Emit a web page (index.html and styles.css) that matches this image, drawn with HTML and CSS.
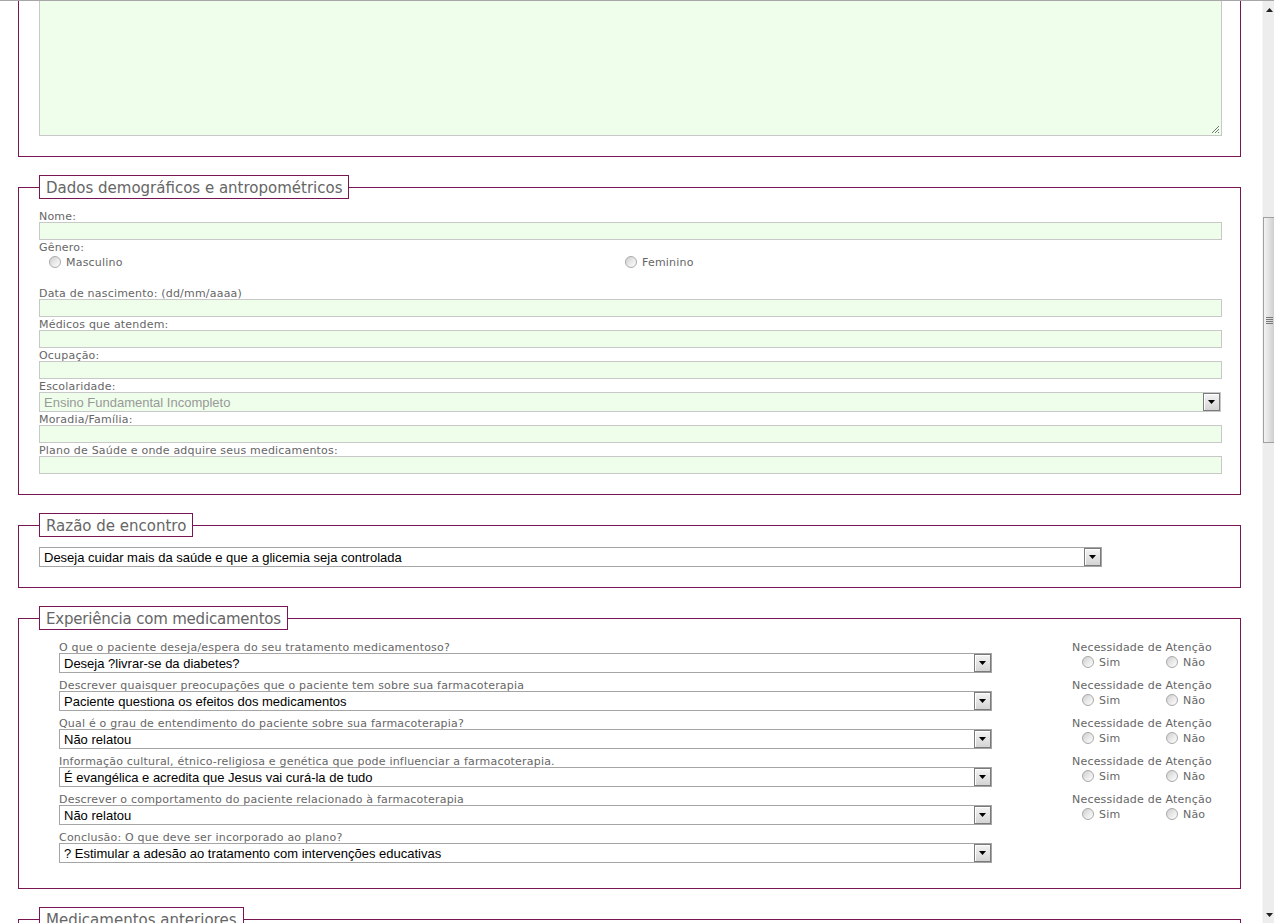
FILE: index.html
```html
<!DOCTYPE html>
<html lang="pt-BR">
<head>
<meta charset="utf-8">
<title>Avaliação farmacoterapêutica</title>
<link rel="stylesheet" href="styles.css">
</head>
<body>
<div class="topline"></div>
<div class="viewport">
  <main class="page">
    <fieldset class="box box-cut">
      <div class="textarea">
        <svg class="grip" width="9" height="9" viewBox="0 0 9 9"><path d="M8 1 L1 8 M8 4 L4 8 M8 7 L7 8" stroke="#777" stroke-width="1" fill="none"/></svg>
      </div>
    </fieldset>

    <fieldset class="box">
      <legend>Dados demográficos e antropométricos</legend>
      <label class="lbl">Nome:</label>
      <input class="txt" type="text">
      <label class="lbl">Gênero:</label>
      <div class="gender">
        <label class="opt"><input type="radio" class="radio" name="genero">Masculino</label>
        <label class="opt"><input type="radio" class="radio" name="genero">Feminino</label>
      </div>
      <label class="lbl">Data de nascimento: (dd/mm/aaaa)</label>
      <input class="txt" type="text">
      <label class="lbl">Médicos que atendem:</label>
      <input class="txt" type="text">
      <label class="lbl">Ocupação:</label>
      <input class="txt" type="text">
      <label class="lbl">Escolaridade:</label>
      <div class="select select-green select-full">
        <span class="val">Ensino Fundamental Incompleto</span>
        <span class="btn"><svg width="7" height="4" viewBox="0 0 7 4"><path d="M0 0 H7 L3.5 4 Z" fill="#000"/></svg></span>
      </div>
      <label class="lbl">Moradia/Família:</label>
      <input class="txt" type="text">
      <label class="lbl">Plano de Saúde e onde adquire seus medicamentos:</label>
      <input class="txt" type="text">
    </fieldset>

    <fieldset class="box">
      <legend>Razão de encontro</legend>
      <div class="select select-razao">
        <span class="val">Deseja cuidar mais da saúde e que a glicemia seja controlada</span>
        <span class="btn"><svg width="7" height="4" viewBox="0 0 7 4"><path d="M0 0 H7 L3.5 4 Z" fill="#000"/></svg></span>
      </div>
    </fieldset>

    <fieldset class="box">
      <legend class="legend-narrow">Experiência com medicamentos</legend>

      <div class="exp-row">
        <div class="exp-main">
          <label class="lbl">O que o paciente deseja/espera do seu tratamento medicamentoso?</label>
          <div class="select">
            <span class="val">Deseja ?livrar-se da diabetes?</span>
            <span class="btn"><svg width="7" height="4" viewBox="0 0 7 4"><path d="M0 0 H7 L3.5 4 Z" fill="#000"/></svg></span>
          </div>
        </div>
        <div class="need">
          <div class="lbl">Necessidade de Atenção</div>
          <div class="need-opts">
            <label class="opt"><input type="radio" class="radio" name="n1">Sim</label>
            <label class="opt"><input type="radio" class="radio" name="n1">Não</label>
          </div>
        </div>
      </div>

      <div class="exp-row">
        <div class="exp-main">
          <label class="lbl">Descrever quaisquer preocupações que o paciente tem sobre sua farmacoterapia</label>
          <div class="select">
            <span class="val">Paciente questiona os efeitos dos medicamentos</span>
            <span class="btn"><svg width="7" height="4" viewBox="0 0 7 4"><path d="M0 0 H7 L3.5 4 Z" fill="#000"/></svg></span>
          </div>
        </div>
        <div class="need">
          <div class="lbl">Necessidade de Atenção</div>
          <div class="need-opts">
            <label class="opt"><input type="radio" class="radio" name="n2">Sim</label>
            <label class="opt"><input type="radio" class="radio" name="n2">Não</label>
          </div>
        </div>
      </div>

      <div class="exp-row">
        <div class="exp-main">
          <label class="lbl">Qual é o grau de entendimento do paciente sobre sua farmacoterapia?</label>
          <div class="select">
            <span class="val">Não relatou</span>
            <span class="btn"><svg width="7" height="4" viewBox="0 0 7 4"><path d="M0 0 H7 L3.5 4 Z" fill="#000"/></svg></span>
          </div>
        </div>
        <div class="need">
          <div class="lbl">Necessidade de Atenção</div>
          <div class="need-opts">
            <label class="opt"><input type="radio" class="radio" name="n3">Sim</label>
            <label class="opt"><input type="radio" class="radio" name="n3">Não</label>
          </div>
        </div>
      </div>

      <div class="exp-row">
        <div class="exp-main">
          <label class="lbl">Informação cultural, étnico-religiosa e genética que pode influenciar a farmacoterapia.</label>
          <div class="select">
            <span class="val">É evangélica e acredita que Jesus vai curá-la de tudo</span>
            <span class="btn"><svg width="7" height="4" viewBox="0 0 7 4"><path d="M0 0 H7 L3.5 4 Z" fill="#000"/></svg></span>
          </div>
        </div>
        <div class="need">
          <div class="lbl">Necessidade de Atenção</div>
          <div class="need-opts">
            <label class="opt"><input type="radio" class="radio" name="n4">Sim</label>
            <label class="opt"><input type="radio" class="radio" name="n4">Não</label>
          </div>
        </div>
      </div>

      <div class="exp-row">
        <div class="exp-main">
          <label class="lbl">Descrever o comportamento do paciente relacionado à farmacoterapia</label>
          <div class="select">
            <span class="val">Não relatou</span>
            <span class="btn"><svg width="7" height="4" viewBox="0 0 7 4"><path d="M0 0 H7 L3.5 4 Z" fill="#000"/></svg></span>
          </div>
        </div>
        <div class="need">
          <div class="lbl">Necessidade de Atenção</div>
          <div class="need-opts">
            <label class="opt"><input type="radio" class="radio" name="n5">Sim</label>
            <label class="opt"><input type="radio" class="radio" name="n5">Não</label>
          </div>
        </div>
      </div>

      <div class="exp-row">
        <div class="exp-main">
          <label class="lbl">Conclusão: O que deve ser incorporado ao plano?</label>
          <div class="select">
            <span class="val">? Estimular a adesão ao tratamento com intervenções educativas</span>
            <span class="btn"><svg width="7" height="4" viewBox="0 0 7 4"><path d="M0 0 H7 L3.5 4 Z" fill="#000"/></svg></span>
          </div>
        </div>
      </div>
    </fieldset>

    <fieldset class="box">
      <legend>Medicamentos anteriores</legend>
      <label class="lbl">&nbsp;</label>
    </fieldset>
  </main>

  <div class="scrollbar">
    <div class="sb-btn"><svg width="7" height="4" viewBox="0 0 7 4"><path d="M0 4 H7 L3.5 0 Z" fill="#222"/></svg></div>
    <div class="sb-track">
      <div class="sb-space"></div>
      <div class="sb-thumb">
        <svg class="sb-grip" width="7" height="8" viewBox="0 0 7 8"><path d="M0 0.5 H7 M0 2.5 H7 M0 4.5 H7 M0 6.5 H7" stroke="#777" stroke-width="1"/></svg>
      </div>
    </div>
    <div class="sb-btn"><svg width="7" height="4" viewBox="0 0 7 4"><path d="M0 0 H7 L3.5 4 Z" fill="#222"/></svg></div>
  </div>
</div>
</body>
</html>
```

FILE: styles.css
```css
html, body {
  margin: 0;
  padding: 0;
  background: #ffffff;
  overflow: hidden;
}

body {
  width: 1274px;
  height: 923px;
  font-family: "DejaVu Sans", Verdana, sans-serif;
}

.topline {
  height: 1px;
  background: #a7a7a7;
}

.viewport {
  display: flex;
  height: 922px;
}

.page {
  flex: 1;
  min-width: 0;
  overflow: hidden;
}

.box {
  margin: 0 21px 18px 18px;
  padding: 10px 18px 20px 20px;
  border: 1px solid #781552;
  min-width: 0;
}

.box-cut {
  border-top: none;
  padding-top: 0;
}

legend {
  padding: 2px 6px 0;
  border: 1px solid #781552;
  font-size: 15px;
  line-height: 20px;
  color: #666666;
  margin: 0;
}

.legend-narrow {
  letter-spacing: -0.2px;
}

.textarea {
  height: 134px;
  border: 1px solid #c8c8c8;
  border-top: none;
  background: #eefeea;
  display: flex;
  justify-content: flex-end;
  align-items: flex-end;
}

.grip {
  display: block;
  margin: 0 1px 1px 0;
}

.lbl {
  display: block;
  font-size: 11px;
  line-height: 11px;
  padding-top: 2px;
  letter-spacing: 0.2px;
  color: #666666;
  white-space: nowrap;
}

.txt {
  display: block;
  width: 100%;
  height: 18px;
  box-sizing: border-box;
  margin: 0;
  padding: 0 4px;
  border: 1px solid #c8c8c8;
  background: #eefeea;
  outline: none;
}

.gender {
  display: grid;
  grid-template-columns: 576px 1fr;
  height: 17px;
  margin-bottom: 16px;
}

.opt {
  display: flex;
  align-items: center;
  padding: 1px 0 0 10px;
  font-size: 11px;
  letter-spacing: 0.2px;
  color: #666666;
  white-space: nowrap;
}

.radio {
  appearance: none;
  -webkit-appearance: none;
  width: 12px;
  height: 12px;
  margin: -1px 5px 0 0;
  border-radius: 50%;
  border: 1px solid #a9a9a9;
  background: linear-gradient(135deg, #cdcdcd 0%, #e6e6e6 45%, #ffffff 100%);
  box-sizing: border-box;
  flex: none;
}

.select {
  display: flex;
  height: 20px;
  box-sizing: border-box;
  border: 1px solid #a5a5a5;
  background: #ffffff;
  font-family: "Liberation Sans", Arial, sans-serif;
  font-size: 13px;
  color: #000000;
}

.select .val {
  flex: 1;
  min-width: 0;
  padding: 1px 0 0 4px;
  line-height: 17px;
  white-space: nowrap;
  overflow: hidden;
}

.select .btn {
  width: 17px;
  flex: none;
  box-sizing: border-box;
  border: 1px solid #7a7a7a;
  box-shadow: inset 1px 1px 0 #ffffff;
  background: linear-gradient(#f4f4f4, #d4d4d4);
  display: flex;
  align-items: center;
  justify-content: center;
}

.select-green {
  border-color: #c8c8c8;
  background: #eefeea;
  color: #999999;
}

.select-full {
  width: 1182px;
}

.select-razao {
  width: 1063px;
}

.exp-row {
  display: grid;
  grid-template-columns: 933px 1fr;
  column-gap: 80px;
  margin: 0 0 5px 20px;
}

.need-opts {
  display: grid;
  grid-template-columns: 84px 84px;
  height: 17px;
}

.scrollbar {
  width: 12px;
  flex: none;
  display: flex;
  flex-direction: column;
  background: #ededed;
  border-left: 1px solid #f6f6f6;
  box-sizing: border-box;
}

.sb-btn {
  height: 17px;
  display: flex;
  align-items: center;
  justify-content: flex-end;
  padding-right: 1px;
}

.sb-track {
  flex: 1;
}

.sb-space {
  height: 199px;
}

.sb-thumb {
  height: 226px;
  box-sizing: border-box;
  border: 1px solid #a0a0a0;
  border-right: none;
  background: linear-gradient(90deg, #f2f2f2 0%, #e6e6e6 40%, #cfcfcf 100%);
  display: flex;
  justify-content: center;
  padding-top: 99px;
}

.sb-grip {
  display: block;
}
```
